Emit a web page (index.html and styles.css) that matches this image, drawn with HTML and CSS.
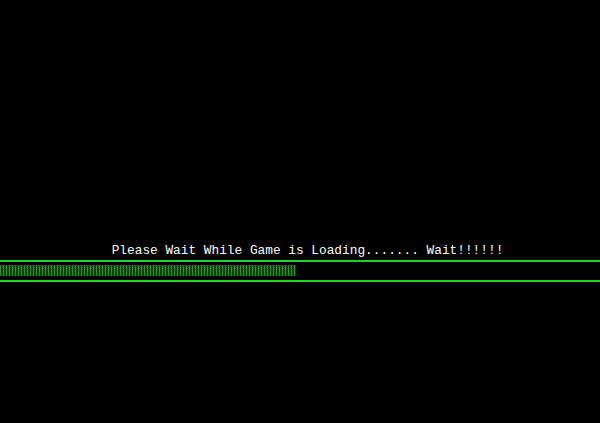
FILE: index.html
```html
<!DOCTYPE html>
<html>
<head>
<meta charset="utf-8">
<link rel="stylesheet" href="styles.css">
</head>
<body>
<div class="screen">
  <div class="msg">Please Wait While Game is Loading....... Wait!!!!!!</div>
  <div class="track">
    <div class="bar" style="width:296px"></div>
  </div>
</div>
</body>
</html>
```
FILE: styles.css
```css
html, body {
  margin: 0;
  padding: 0;
  background: #000;
}
.screen {
  width: 600px;
  height: 423px;
  display: flex;
  flex-direction: column;
  padding-top: 243px;
  box-sizing: border-box;
}
.msg {
  font-family: "Liberation Mono", "DejaVu Sans Mono", monospace;
  font-size: 12.8px;
  line-height: 16px;
  height: 16px;
  color: #fff;
  text-align: center;
  padding-left: 15px;
  white-space: pre;
}
.track {
  margin-top: 1px;
  border-top: 2px solid #1ad81a;
  border-bottom: 2px solid #1ad81a;
  padding: 3px 0 4px;
  height: 11px;
}
.bar {
  height: 11px;
  background-color: #0b520b;
  background-image:
    repeating-linear-gradient(90deg, #1f9a1f 0 1px, transparent 1px 3px),
    conic-gradient(#063306 25%, transparent 0 50%, #063306 0 75%, transparent 0);
  background-size: auto, 2px 2px;
}
```
